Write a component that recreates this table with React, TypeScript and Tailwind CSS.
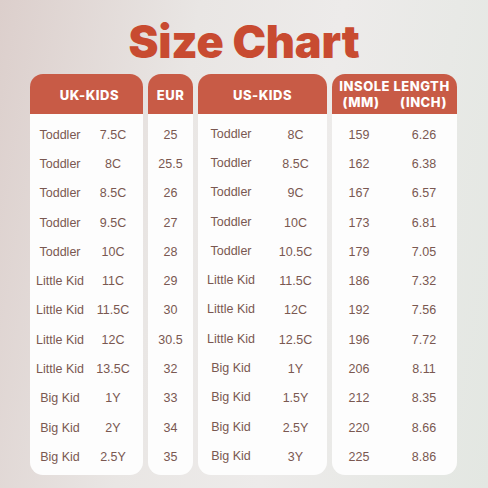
const uk = [
  ["Toddler", "7.5C"],
  ["Toddler", "8C"],
  ["Toddler", "8.5C"],
  ["Toddler", "9.5C"],
  ["Toddler", "10C"],
  ["Little Kid", "11C"],
  ["Little Kid", "11.5C"],
  ["Little Kid", "12C"],
  ["Little Kid", "13.5C"],
  ["Big Kid", "1Y"],
  ["Big Kid", "2Y"],
  ["Big Kid", "2.5Y"],
];
const eur = ["25", "25.5", "26", "27", "28", "29", "30", "30.5", "32", "33", "34", "35"];
const us = [
  ["Toddler", "8C"],
  ["Toddler", "8.5C"],
  ["Toddler", "9C"],
  ["Toddler", "10C"],
  ["Toddler", "10.5C"],
  ["Little Kid", "11.5C"],
  ["Little Kid", "12C"],
  ["Little Kid", "12.5C"],
  ["Big Kid", "1Y"],
  ["Big Kid", "1.5Y"],
  ["Big Kid", "2.5Y"],
  ["Big Kid", "3Y"],
];
const insole = [
  ["159", "6.26"],
  ["162", "6.38"],
  ["167", "6.57"],
  ["173", "6.81"],
  ["179", "7.05"],
  ["186", "7.32"],
  ["192", "7.56"],
  ["196", "7.72"],
  ["206", "8.11"],
  ["212", "8.35"],
  ["220", "8.66"],
  ["225", "8.86"],
];

const head =
  "h-[41px] bg-[#c85b46] rounded-t-[13px] flex flex-col items-center justify-center text-white font-extrabold text-[13px] tracking-[0.04em] font-['Inter',sans-serif]";
const body = "flex-1 bg-[#fdfdfd] rounded-b-[13px] pt-[6px] pb-[3px] text-[12.5px] text-[#7a5851]";
const row = "h-[29.3px] flex items-center";

export default function App() {
  return (
    <div className="w-[488px] h-[488px] overflow-hidden bg-[linear-gradient(100deg,#dccfcc_0%,#e9e6e4_35%,#edebea_60%,#e3e7e2_100%)] font-['Liberation_Sans',Arial,sans-serif]">
      <h1 className="pt-[19px] text-center text-[45px] leading-[45px] font-black text-[#c84b31] font-['Inter',sans-serif] tracking-[-0.005em]">
        Size Chart
      </h1>
      <div className="mt-[10px] ml-[30px] flex gap-[5px] h-[401px]">
        <div className="w-[113px] flex flex-col">
          <div className={head + " pt-[4px] pl-[6px]"}>UK-KIDS</div>
          <div className={body}>
            {uk.map(([a, b], i) => (
              <div key={i} className={row}>
                <span className="w-[60px] text-center">{a}</span>
                <span className="w-[46px] text-center">{b}</span>
              </div>
            ))}
          </div>
        </div>
        <div className="w-[45px] flex flex-col">
          <div className={head + " pt-[4px]"}>EUR</div>
          <div className={body}>
            {eur.map((a, i) => (
              <div key={i} className={row + " justify-center"}>
                {a}
              </div>
            ))}
          </div>
        </div>
        <div className="w-[129px] flex flex-col">
          <div className={head + " pt-[4px]"}>US-KIDS</div>
          <div className={body}>
            {us.map(([a, b], i) => (
              <div key={i} className={row}>
                <span className="w-[66px] text-center -mt-[2px]">{a}</span>
                <span className="w-[63px] text-center">{b}</span>
              </div>
            ))}
          </div>
        </div>
        <div className="w-[125px] flex flex-col">
          <div className={head + " leading-[16px] text-[12.5px]"}>
            <div>INSOLE LENGTH</div>
            <div className="flex w-full">
              <span className="w-[58px] text-center">(MM)</span>
              <span className="flex-1 text-center">(INCH)</span>
            </div>
          </div>
          <div className={body}>
            {insole.map(([a, b], i) => (
              <div key={i} className={row}>
                <span className="w-[54px] text-center">{a}</span>
                <span className="flex-1 text-center pl-[5px]">{b}</span>
              </div>
            ))}
          </div>
        </div>
      </div>
    </div>
  );
}
